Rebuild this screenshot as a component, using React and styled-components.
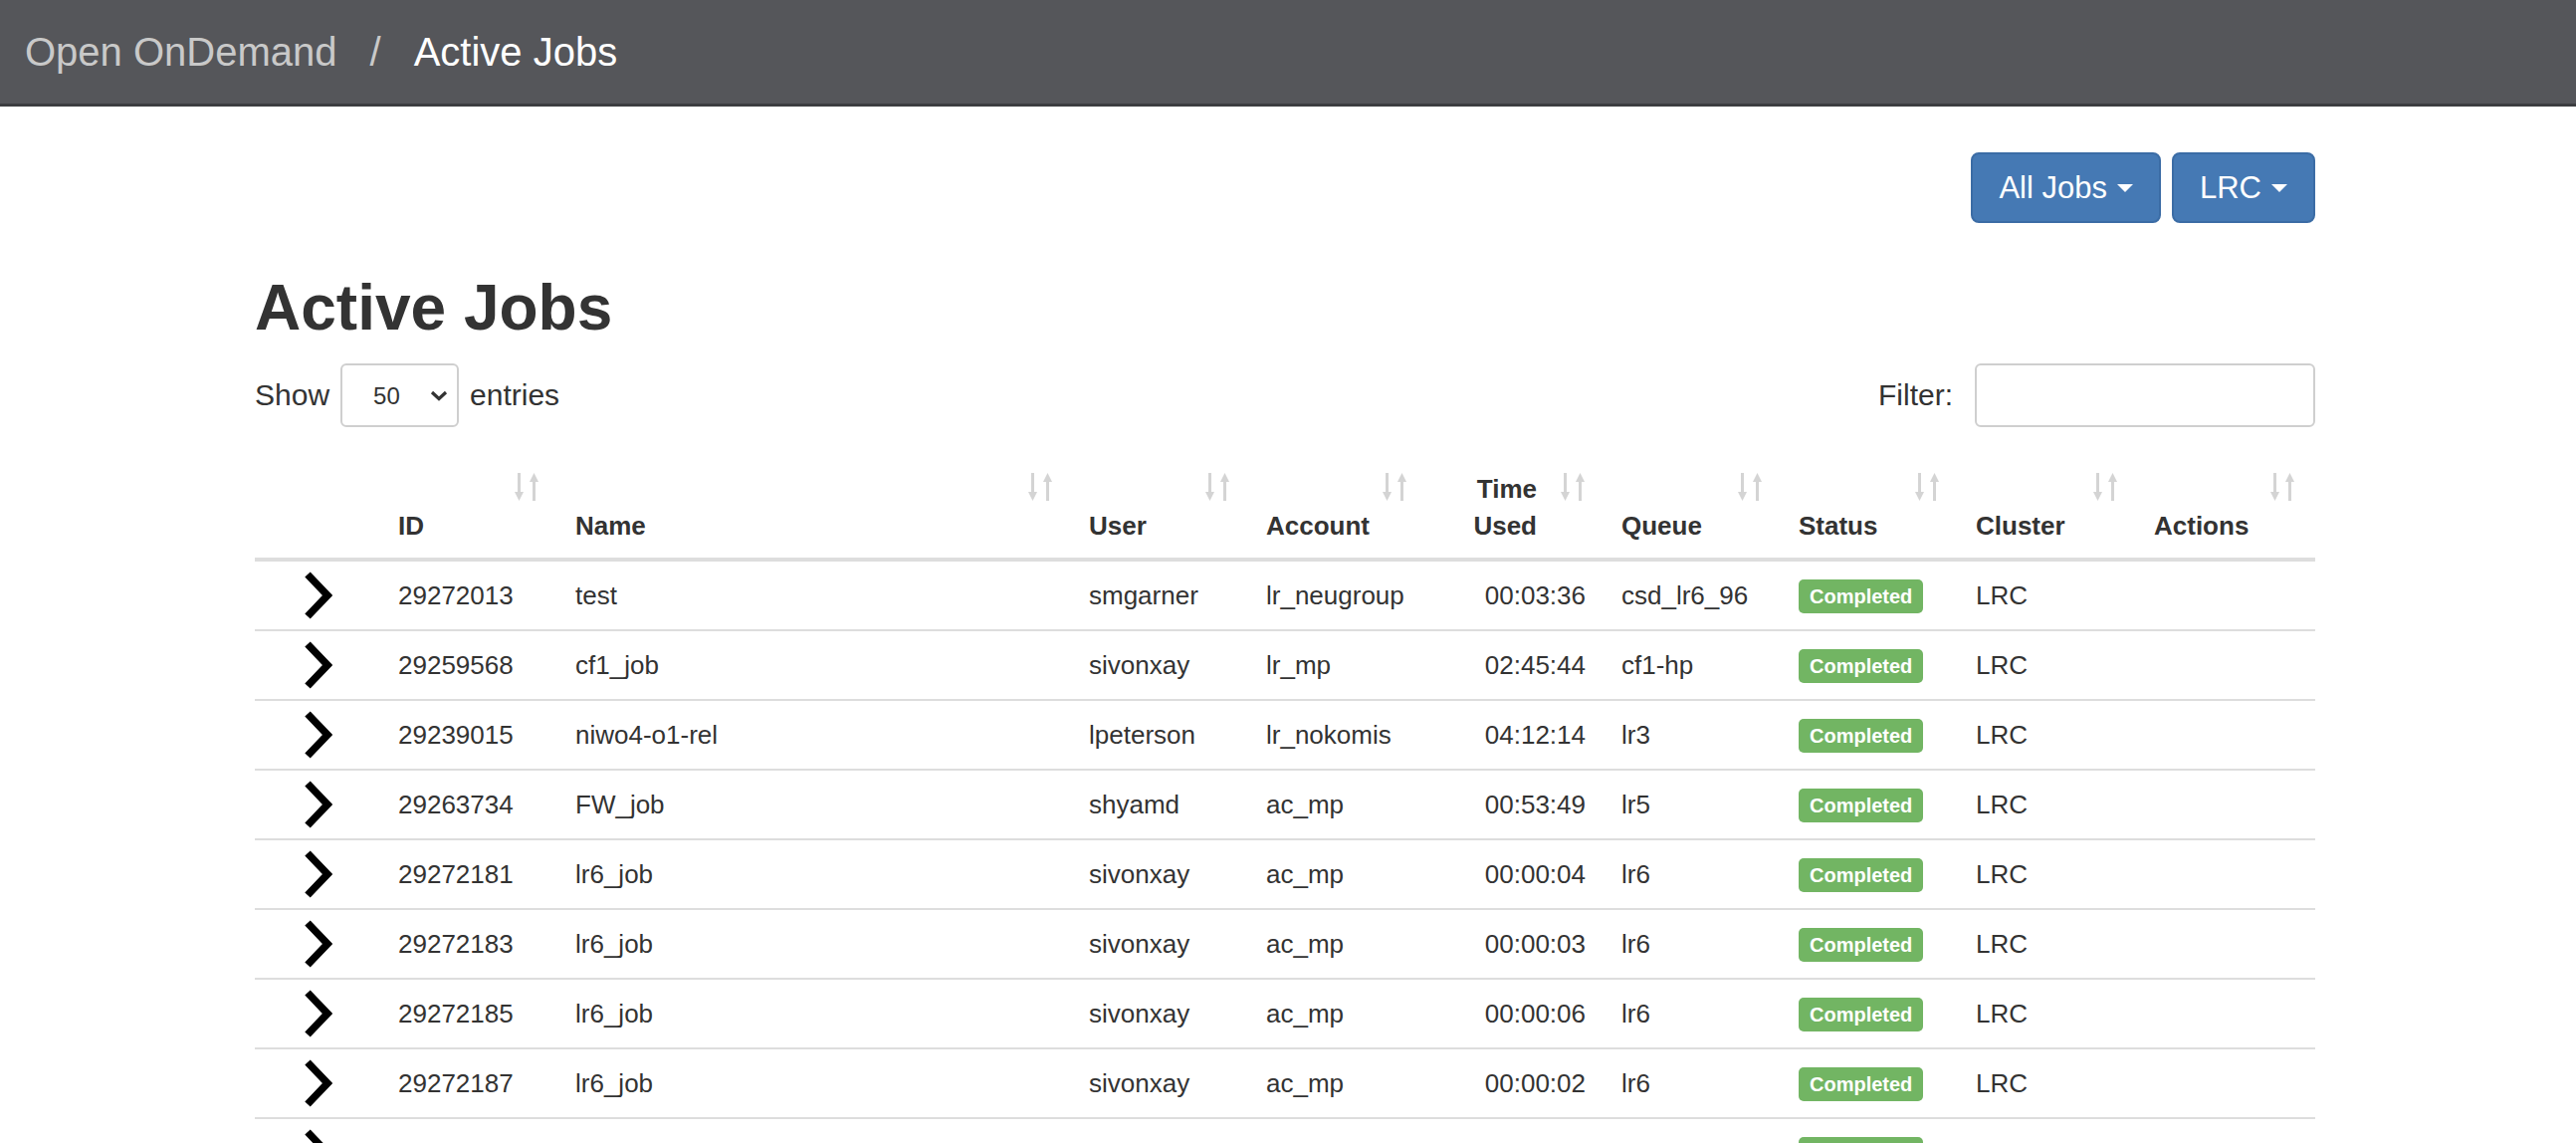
import styled, { createGlobalStyle } from "styled-components";

const GlobalStyle = createGlobalStyle`
    body {
        margin: 0;
        background: #fff;
        color: #333;
        font-family: "Liberation Sans", Arial, sans-serif;
    }
    * { box-sizing: border-box; }
`

const Navbar = styled.div`
    height: 107px;
    background: #55565a;
    border-bottom: 3px solid #3c3d40;
    display: flex;
    align-items: center;
    gap: 33px;
    padding-left: 25px;
    font-size: 40px;
`

const Crumb = styled.span`
    color: ${({ $active }) => $active ? "#ffffff" : "#c9c9c9"};
`

const Container = styled.div`
    width: 2070px;
    margin-left: 256px;
`

const Toolbar = styled.div`
    display: flex;
    justify-content: flex-end;
    gap: 11px;
    padding-top: 46px;
`

const DropButton = styled.button`
    height: 71px;
    padding: 0 26px;
    display: inline-flex;
    align-items: center;
    gap: 10px;
    background: #4579b4;
    border: 2px solid #3b6ca5;
    border-radius: 8px;
    color: #fff;
    font-family: inherit;
    font-size: 31px;
`

const Caret = styled.span`
    width: 0;
    height: 0;
    border-top: 8px solid #fff;
    border-left: 8px solid transparent;
    border-right: 8px solid transparent;
`

const Heading = styled.h1`
    margin: 50px 0 21px;
    font-size: 64px;
    line-height: 70px;
    font-weight: bold;
    color: #333;
`

const Controls = styled.div`
    display: flex;
    justify-content: space-between;
    align-items: center;
    height: 64px;
`

const ControlLabel = styled.label`
    display: flex;
    align-items: center;
    gap: ${({ $gap }) => $gap}px;
    font-size: 30px;
    color: #333;
`

const SelectWrap = styled.div`
    position: relative;
    width: 119px;
    height: 64px;
`

const Select = styled.select`
    appearance: none;
    width: 100%;
    height: 100%;
    padding-left: 31px;
    border: 2px solid #cfcfcf;
    border-radius: 6px;
    background: #fff;
    color: #333;
    font-family: inherit;
    font-size: 24px;
`

const SelectArrow = styled.svg`
    position: absolute;
    right: 11px;
    top: 27px;
    pointer-events: none;
`

const FilterInput = styled.input`
    width: 342px;
    height: 64px;
    border: 2px solid #cfcfcf;
    border-radius: 6px;
`

const Table = styled.table`
    margin-top: 29px;
    width: 2070px;
    border-collapse: collapse;
    table-layout: fixed;
`

const Th = styled.th`
    position: relative;
    text-align: ${({ $right }) => $right ? "right" : "left"};
    vertical-align: bottom;
    padding: 15px ${({ $right }) => $right ? 69 : 16}px 13px 16px;
    font-size: 26px;
    line-height: 37px;
    font-weight: bold;
    color: #333;
    border-bottom: 4px solid #dddddd;
`

const SortIcon = styled.svg`
    position: absolute;
    top: 17px;
    right: 20px;
`

const Td = styled.td`
    height: 68px;
    text-align: ${({ $right }) => $right ? "right" : "left"};
    vertical-align: middle;
    padding: 15px ${({ $right }) => $right ? 20 : 16}px 15px 16px;
    font-size: 26px;
    line-height: 38px;
    color: #333;
    border-bottom: 2px solid #dddddd;
    white-space: nowrap;
`

const ToggleCell = styled.td`
    padding: 10px 0;
    border-bottom: 2px solid #dddddd;
`

const Chevron = styled.svg`
    display: block;
    margin: 0 auto;
`

const Badge = styled.span`
    display: inline-block;
    vertical-align: top;
    margin-top: 3px;
    padding: 7px 11px;
    background: #72b563;
    color: #fff;
    border-radius: 5px;
    font-size: 20px;
    line-height: 20px;
    font-weight: bold;
`

const columns = [
    { label: "ID", width: 178 },
    { label: "Name", width: 516 },
    { label: "User", width: 178 },
    { label: "Account", width: 178 },
    { label: "Time Used", width: 179, right: true },
    { label: "Queue", width: 178 },
    { label: "Status", width: 178 },
    { label: "Cluster", width: 179 },
    { label: "Actions", width: 178 },
]

const jobs = [
    ["29272013", "test", "smgarner", "lr_neugroup", "00:03:36", "csd_lr6_96"],
    ["29259568", "cf1_job", "sivonxay", "lr_mp", "02:45:44", "cf1-hp"],
    ["29239015", "niwo4-o1-rel", "lpeterson", "lr_nokomis", "04:12:14", "lr3"],
    ["29263734", "FW_job", "shyamd", "ac_mp", "00:53:49", "lr5"],
    ["29272181", "lr6_job", "sivonxay", "ac_mp", "00:00:04", "lr6"],
    ["29272183", "lr6_job", "sivonxay", "ac_mp", "00:00:03", "lr6"],
    ["29272185", "lr6_job", "sivonxay", "ac_mp", "00:00:06", "lr6"],
    ["29272187", "lr6_job", "sivonxay", "ac_mp", "00:00:02", "lr6"],
    ["29272189", "lr6_job", "sivonxay", "ac_mp", "00:00:03", "lr6"],
]

function SortArrows() {
    return (
        <SortIcon width="25" height="28" viewBox="0 0 25 28" fill="#d4d4d4">
            <rect x="3" y="0" width="3" height="21" />
            <polygon points="0,19 9,19 4.5,28" />
            <rect x="18" y="7" width="3" height="21" />
            <polygon points="15,9 24,9 19.5,0" />
        </SortIcon>
    )
}

function App() {
    return (
        <>
            <GlobalStyle />
            <Navbar>
                <Crumb>Open OnDemand</Crumb>
                <Crumb>/</Crumb>
                <Crumb $active>Active Jobs</Crumb>
            </Navbar>
            <Container>
                <Toolbar>
                    <DropButton>All Jobs <Caret /></DropButton>
                    <DropButton>LRC <Caret /></DropButton>
                </Toolbar>
                <Heading>Active Jobs</Heading>
                <Controls>
                    <ControlLabel $gap={11}>
                        Show
                        <SelectWrap>
                            <Select defaultValue="50">
                                <option value="10">10</option>
                                <option value="25">25</option>
                                <option value="50">50</option>
                                <option value="100">100</option>
                            </Select>
                            <SelectArrow width="18" height="11" viewBox="0 0 18 11">
                                <polyline points="2,2 9,8.5 16,2" fill="none" stroke="#333" strokeWidth="3.2" />
                            </SelectArrow>
                        </SelectWrap>
                        entries
                    </ControlLabel>
                    <ControlLabel $gap={22}>
                        Filter:
                        <FilterInput type="search" />
                    </ControlLabel>
                </Controls>
                <Table>
                    <colgroup>
                        <col style={{ width: 128 }} />
                        {columns.map((c) => (
                            <col key={c.label} style={{ width: c.width }} />
                        ))}
                    </colgroup>
                    <thead>
                        <tr>
                            <Th />
                            {columns.map((c) => (
                                <Th key={c.label} $right={c.right}>
                                    {c.label}
                                    <SortArrows />
                                </Th>
                            ))}
                        </tr>
                    </thead>
                    <tbody>
                        {jobs.map((job) => (
                            <tr key={job[0]}>
                                <ToggleCell>
                                    <Chevron width="28" height="48" viewBox="0 0 28 48">
                                        <polyline points="3,3 23,24 3,45" fill="none" stroke="#000" strokeWidth="7.5" />
                                    </Chevron>
                                </ToggleCell>
                                <Td>{job[0]}</Td>
                                <Td>{job[1]}</Td>
                                <Td>{job[2]}</Td>
                                <Td>{job[3]}</Td>
                                <Td $right>{job[4]}</Td>
                                <Td>{job[5]}</Td>
                                <Td><Badge>Completed</Badge></Td>
                                <Td>LRC</Td>
                                <Td></Td>
                            </tr>
                        ))}
                    </tbody>
                </Table>
            </Container>
        </>
    )
}

export default App;
